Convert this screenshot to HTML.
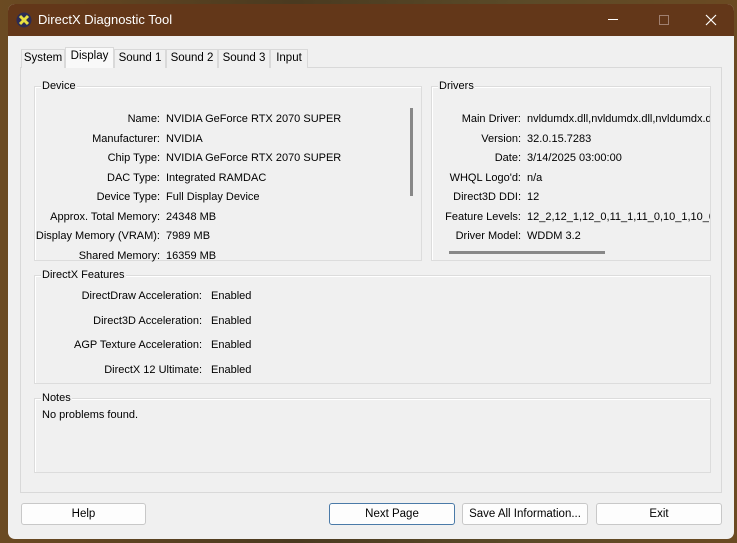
<!DOCTYPE html>
<html><head><style>
*{margin:0;padding:0;box-sizing:border-box}
body{width:737px;height:543px;overflow:hidden;background:linear-gradient(90deg,#6b4a22,#4a3a20 40%,#5a4a28 70%,#6b4a22);font-family:"Liberation Sans",sans-serif;font-size:11px;color:#000;position:relative}
.win{position:absolute;left:8px;top:4px;width:726px;height:535px;background:#f0f0f0;border-radius:7px;overflow:hidden}
.title{position:absolute;left:0;top:0;width:726px;height:32px;background:#633719;color:#fff;font-size:13px}
.a{position:absolute;white-space:nowrap}
.r{text-align:right}
.panel{position:absolute;left:12px;top:63px;width:702px;height:426px;border:1px solid #d9d9d9;background:#f0f0f0}
.tab{position:absolute;top:45px;height:19px;border:1px solid #d9d9d9;border-bottom:none;background:#f0f0f0;text-align:center;line-height:17px;font-size:11.5px}
.g{position:absolute;border:1px solid #dcdcdc;box-shadow:inset 1px 1px 0 #fff}
.gt{position:absolute;top:-6px;left:6px;background:#f0f0f0;padding:0 1px;font-size:11px;line-height:11px}
.btn{position:absolute;top:499px;height:22px;border:1px solid #c8c8c8;background:#fdfdfd;border-radius:3px;text-align:center;line-height:20px;font-size:11.5px}
</style></head><body>
<div class="win">
 <div class="title">
  <svg class="a" style="left:8px;top:8px" width="16" height="16" viewBox="0 0 16 16"><circle cx="8" cy="8" r="7.5" fill="#2b2b55"/><path d="M4 4L12 12M12 4L4 12" stroke="#e8e040" stroke-width="3"/></svg>
  <div class="a" style="left:30px;top:8px">DirectX Diagnostic Tool</div>
  <div class="a" style="left:600px;top:15px;width:10px;height:1px;background:#fff"></div>
  <div class="a" style="left:651px;top:11px;width:10px;height:10px;border:1px solid #a08070"></div>
  <svg class="a" style="left:697px;top:10px" width="12" height="12"><path d="M1 1L11 11M11 1L1 11" stroke="#fff" stroke-width="1.2"/></svg>
 </div>
 <div class="panel"></div>
 <div class="tab" style="left:13px;width:44px">System</div>
 <div class="tab" style="left:57px;width:49px;top:43px;height:21px;background:#f9f9f9;z-index:2">Display</div>
 <div class="tab" style="left:106px;width:52px">Sound 1</div>
 <div class="tab" style="left:158px;width:52px">Sound 2</div>
 <div class="tab" style="left:210px;width:52px">Sound 3</div>
 <div class="tab" style="left:262px;width:38px">Input</div>

 <div class="g" style="left:26px;top:82px;width:388px;height:175px"><span class="gt">Device</span></div>
 <div class="g" style="left:423px;top:82px;width:280px;height:175px"><span class="gt">Drivers</span></div>
 <div class="g" style="left:26px;top:271px;width:677px;height:109px"><span class="gt">DirectX Features</span></div>
 <div class="g" style="left:26px;top:394px;width:677px;height:75px"><span class="gt">Notes</span></div>

 <div class="a" style="left:402px;top:104px;width:3px;height:88px;background:#888"></div>
 <div class="a" style="left:441px;top:247px;width:156px;height:3px;background:#888"></div>

 <div class="a r" style="left:0;width:152px;top:106px;line-height:19.5px">Name:<br>Manufacturer:<br>Chip Type:<br>DAC Type:<br>Device Type:<br>Approx. Total Memory:<br>Display Memory (VRAM):<br>Shared Memory:</div>
 <div class="a" style="left:158px;top:106px;line-height:19.5px">NVIDIA GeForce RTX 2070 SUPER<br>NVIDIA<br>NVIDIA GeForce RTX 2070 SUPER<br>Integrated RAMDAC<br>Full Display Device<br>24348 MB<br>7989 MB<br>16359 MB</div>

 <div class="a r" style="left:400px;width:113px;top:106px;line-height:19.5px">Main Driver:<br>Version:<br>Date:<br>WHQL Logo'd:<br>Direct3D DDI:<br>Feature Levels:<br>Driver Model:</div>
 <div class="a" style="left:519px;top:106px;line-height:19.5px;width:183px;overflow:hidden">nvldumdx.dll,nvldumdx.dll,nvldumdx.dll<br>32.0.15.7283<br>3/14/2025 03:00:00<br>n/a<br>12<br>12_2,12_1,12_0,11_1,11_0,10_1,10_0<br>WDDM 3.2</div>

 <div class="a r" style="left:0;width:194px;top:280px;line-height:24.5px">DirectDraw Acceleration:<br>Direct3D Acceleration:<br>AGP Texture Acceleration:<br>DirectX 12 Ultimate:</div>
 <div class="a" style="left:203px;top:280px;line-height:24.5px">Enabled<br>Enabled<br>Enabled<br>Enabled</div>

 <div class="a" style="left:34px;top:405px">No problems found.</div>

 <div class="btn" style="left:13px;width:125px">Help</div>
 <div class="btn" style="left:321px;width:126px;border-color:#4a7aa8">Next Page</div>
 <div class="btn" style="left:454px;width:126px">Save All Information...</div>
 <div class="btn" style="left:588px;width:126px">Exit</div>
</div>
</body></html>
